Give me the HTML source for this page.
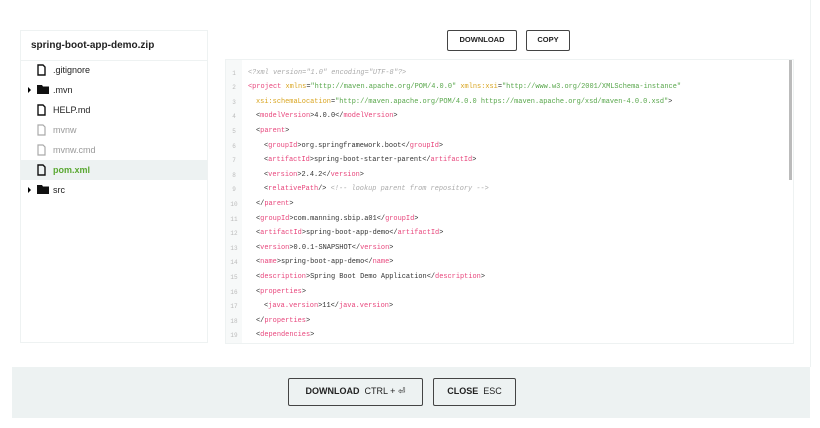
<!DOCTYPE html>
<html><head><style>
body{margin:0;width:820px;height:428px;background:#fff;position:relative;overflow:hidden;font-family:"Liberation Sans",sans-serif}
.left{position:absolute;left:20px;top:30px;width:186px;height:311px;border:1px solid #eef2f2}
.left .h{height:29px;border-bottom:1px solid #eef2f2;font-weight:bold;font-size:10px;line-height:29px;padding-left:10px;color:#222}
.row{position:absolute;left:0;width:186px;height:20px;font-size:9px;line-height:20px;color:#222}
.row span{position:absolute;left:32px}
.row svg{position:absolute;left:16px;top:4px}
.arr{position:absolute;left:7px;top:7px;width:0;height:0;border-left:3px solid #000;border-top:3px solid transparent;border-bottom:3px solid transparent}
.code{position:absolute;left:225px;top:59px;width:567px;height:283px;border:1px solid #eef2f2;overflow:hidden}
.gut{position:absolute;left:0;top:0;width:16px;height:100%;background:#f7f9f9}
.ln{position:absolute;font-family:"Liberation Mono",monospace;font-size:6.95px;color:#333;white-space:pre;height:14px}
.n{position:absolute;left:3px;width:10px;text-align:center;color:#bbb;font-family:"Liberation Mono",monospace;font-size:6px}
.t{color:#e8467c}.a{color:#d9a520}.s{color:#57a64a}.c{color:#aaa;font-style:italic}
.btn{position:absolute;border:1.5px solid #444;border-radius:2px;font-weight:bold;color:#222;text-align:center;box-sizing:border-box}
.foot{position:absolute;left:12px;top:367px;width:798px;height:51px;background:#edf2f2}
</style></head><body>
<div style="position:absolute;left:810px;top:0;width:1px;height:367px;background:#eef2f2"></div>
<div class="left"><div class="h">spring-boot-app-demo.zip</div></div>
<div style="position:absolute;left:21px;top:60px">
<div class="row" style="top:0"><svg width="9" height="12" viewBox="0 0 9 12"><path d="M1 1h5l2 2v8H1z" fill="none" stroke="#111" stroke-width="1.4"/></svg><span>.gitignore</span></div>
<div class="row" style="top:20px"><i class="arr"></i><svg width="12" height="11" viewBox="0 0 12 11"><path d="M0 1h5l1 1.5h6V10H0z" fill="#111"/></svg><span>.mvn</span></div>
<div class="row" style="top:40px"><svg width="9" height="12" viewBox="0 0 9 12"><path d="M1 1h5l2 2v8H1z" fill="none" stroke="#111" stroke-width="1.4"/></svg><span>HELP.md</span></div>
<div class="row" style="top:60px;color:#999"><svg width="9" height="12" viewBox="0 0 9 12"><path d="M1 1h5l2 2v8H1z" fill="none" stroke="#aaa" stroke-width="1.2"/></svg><span>mvnw</span></div>
<div class="row" style="top:80px;color:#999"><svg width="9" height="12" viewBox="0 0 9 12"><path d="M1 1h5l2 2v8H1z" fill="none" stroke="#aaa" stroke-width="1.2"/></svg><span>mvnw.cmd</span></div>
<div class="row" style="top:100px;background:#edf2f2;color:#5aa832;font-weight:bold"><svg width="9" height="12" viewBox="0 0 9 12"><path d="M1 1h5l2 2v8H1z" fill="none" stroke="#111" stroke-width="1.4"/></svg><span>pom.xml</span></div>
<div class="row" style="top:120px"><i class="arr"></i><svg width="12" height="11" viewBox="0 0 12 11"><path d="M0 1h5l1 1.5h6V10H0z" fill="#111"/></svg><span>src</span></div>
</div>
<div class="btn" style="left:447px;top:30px;width:70px;height:21px;font-size:7.5px;line-height:18px">DOWNLOAD</div>
<div class="btn" style="left:526px;top:30px;width:44px;height:21px;font-size:7.5px;line-height:18px">COPY</div>
<div class="code"><div class="gut"></div>
<div style="position:absolute;left:563px;top:0;width:3px;height:120px;background:#bbb"></div>
<div id="lines"></div>
</div>
<script>
var L=[
[0,'<span class="c">&lt;?xml version="1.0" encoding="UTF-8"?&gt;</span>'],
[0,'<span class="t">&lt;project</span> <span class="a">xmlns</span>=<span class="s">"http://maven.apache.org/POM/4.0.0"</span> <span class="a">xmlns:xsi</span>=<span class="s">"http://www.w3.org/2001/XMLSchema-instance"</span>'],
[1,'<span class="a">xsi:schemaLocation</span>=<span class="s">"http://maven.apache.org/POM/4.0.0 https://maven.apache.org/xsd/maven-4.0.0.xsd"</span>&gt;'],
[1,'&lt;<span class="t">modelVersion</span>&gt;4.0.0&lt;/<span class="t">modelVersion</span>&gt;'],
[1,'&lt;<span class="t">parent</span>&gt;'],
[2,'&lt;<span class="t">groupId</span>&gt;org.springframework.boot&lt;/<span class="t">groupId</span>&gt;'],
[2,'&lt;<span class="t">artifactId</span>&gt;spring-boot-starter-parent&lt;/<span class="t">artifactId</span>&gt;'],
[2,'&lt;<span class="t">version</span>&gt;2.4.2&lt;/<span class="t">version</span>&gt;'],
[2,'&lt;<span class="t">relativePath</span>/&gt; <span class="c">&lt;!-- lookup parent from repository --&gt;</span>'],
[1,'&lt;/<span class="t">parent</span>&gt;'],
[1,'&lt;<span class="t">groupId</span>&gt;com.manning.sbip.a01&lt;/<span class="t">groupId</span>&gt;'],
[1,'&lt;<span class="t">artifactId</span>&gt;spring-boot-app-demo&lt;/<span class="t">artifactId</span>&gt;'],
[1,'&lt;<span class="t">version</span>&gt;0.0.1-SNAPSHOT&lt;/<span class="t">version</span>&gt;'],
[1,'&lt;<span class="t">name</span>&gt;spring-boot-app-demo&lt;/<span class="t">name</span>&gt;'],
[1,'&lt;<span class="t">description</span>&gt;Spring Boot Demo Application&lt;/<span class="t">description</span>&gt;'],
[1,'&lt;<span class="t">properties</span>&gt;'],
[2,'&lt;<span class="t">java.version</span>&gt;11&lt;/<span class="t">java.version</span>&gt;'],
[1,'&lt;/<span class="t">properties</span>&gt;'],
[1,'&lt;<span class="t">dependencies</span>&gt;']];
var h='';L.forEach(function(l,i){var y=8.5+i*14.6;h+='<div class="n" style="top:'+(y+1)+'px">'+(i+1)+'</div><div class="ln" style="left:'+(22+l[0]*8)+'px;top:'+y+'px">'+l[1]+'</div>';});
document.getElementById('lines').innerHTML=h;
</script>
<div class="foot"></div>
<div class="btn" style="left:288px;top:378px;width:135px;height:28px;font-size:9px;line-height:25px">DOWNLOAD <span style="font-weight:normal">&nbsp;CTRL + ⏎</span></div>
<div class="btn" style="left:433px;top:378px;width:83px;height:28px;font-size:9px;line-height:25px">CLOSE <span style="font-weight:normal">&nbsp;ESC</span></div>
</body></html>
